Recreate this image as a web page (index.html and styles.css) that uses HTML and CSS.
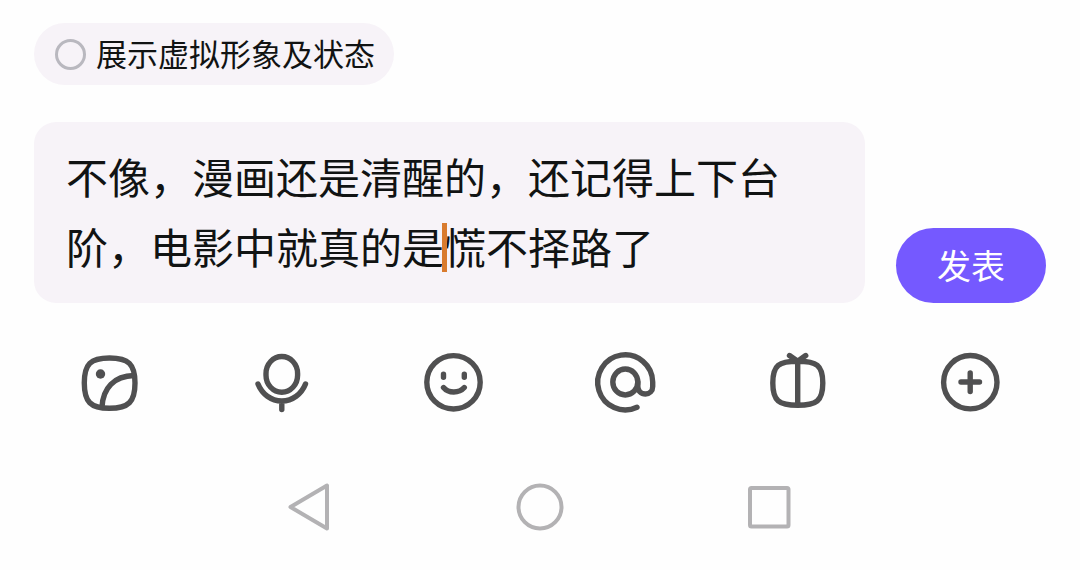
FILE: index.html
```html
<!DOCTYPE html>
<html lang="zh-CN">
<head>
<meta charset="utf-8">
<meta name="viewport" content="width=device-width, initial-scale=1">
<title>发表评论</title>
<link rel="stylesheet" href="styles.css">
</head>
<body>
<main class="composer">
  <label class="status-toggle">
    <input class="status-radio" type="radio" name="status">
    <span class="status-text">展示虚拟形象及状态</span>
  </label>
  <form class="compose-row">
    <div class="field">
      <textarea class="field-input" rows="2" aria-label="评论内容" spellcheck="false">不像，漫画还是清醒的，还记得上下台阶，电影中就真的是慌不择路了</textarea>
      <span class="caret"></span>
    </div>
    <button class="send" type="button">发表</button>
  </form>
</main>
<div class="tools">
  <button class="tool" type="button" aria-label="图片">
    <svg class="tool-icon" viewBox="0 0 80 80"><path d="M39.500 18C58.500 18 65 24 65 43C65 62 58.500 68.300 39.500 68.300C20.500 68.300 14.300 62 14.300 43C14.300 24 20.500 18 39.500 18Z"/><path d="M32 67C33 48 44 36 64 35.500"/><circle class="solid" cx="30.500" cy="34" r="4.700"/></svg>
  </button>
  <button class="tool" type="button" aria-label="语音">
    <svg class="tool-icon" viewBox="0 0 80 80"><rect x="24" y="16.500" width="31.600" height="35.700" rx="15.800" ry="17"/><path d="M16 44C20 54 29 61 39.800 61S59.500 54 63.500 44M39.800 61V69.500"/></svg>
  </button>
  <button class="tool" type="button" aria-label="表情">
    <svg class="tool-icon" viewBox="0 0 80 80"><circle cx="39.500" cy="42.300" r="26.700"/><path d="M29.500 34.200V37.300M50.300 34.200V37.300M29.500 47.500C34.500 53.500 45 53.500 50.300 47.500"/></svg>
  </button>
  <button class="tool" type="button" aria-label="提及">
    <svg class="tool-icon" viewBox="0 0 80 80"><ellipse cx="39.300" cy="42" rx="12.500" ry="13"/><path d="M51 67.200A27.500 27.500 0 1 1 66.700 42V46.500C66.700 51 63.500 54 59.500 54C55 54 51.800 51 51.800 46V42"/></svg>
  </button>
  <button class="tool" type="button" aria-label="礼物">
    <svg class="tool-icon" viewBox="0 0 80 80"><path d="M39.700 21.300C58.500 21.300 64.800 25 64.800 43C64.800 61 58.500 65.300 39.700 65.300C21 65.300 14.800 61 14.800 43C14.800 25 21 21.300 39.700 21.300ZM39.700 21.300V65.300M31.500 15.500L39.700 21.300L47.700 15.500"/></svg>
  </button>
  <button class="tool" type="button" aria-label="更多">
    <svg class="tool-icon" viewBox="0 0 80 80"><circle cx="40.300" cy="42.200" r="26.700"/><path d="M31 42H49.500M40.200 33V51.500"/></svg>
  </button>
</div>
<nav class="system-nav">
  <button class="nav-button" type="button" aria-label="返回">
    <svg class="nav-icon" viewBox="0 0 60 60"><path d="M10.500 30L47 8.500V51.500Z"/></svg>
  </button>
  <button class="nav-button" type="button" aria-label="主页">
    <svg class="nav-icon" viewBox="0 0 60 60"><circle cx="30" cy="30" r="21.500"/></svg>
  </button>
  <button class="nav-button" type="button" aria-label="最近任务">
    <svg class="nav-icon" viewBox="0 0 60 60"><rect x="10" y="11" width="38.500" height="38.500" rx="1.500"/></svg>
  </button>
</nav>
</body>
</html>
```
FILE: styles.css
```css
* {
  box-sizing: border-box;
}

body {
  margin: 0;
  background: #fefefe;
  color: #111313;
  font-family: "Noto Sans CJK SC", sans-serif;
}

button {
  padding: 0;
  border: 0;
  background: none;
  font: inherit;
}

.composer {
  display: flex;
  flex-direction: column;
  align-items: flex-start;
  gap: 37px;
  padding: 23px 34px 37px;
}

.status-toggle {
  display: flex;
  align-items: center;
  gap: 10px;
  padding: 8px 19px 8px 21px;
  border-radius: 31px;
  background: #f7f3f8;
  font-size: 31px;
}

.status-text {
  padding-bottom: 2px;
  line-height: 44px;
}

.status-radio {
  appearance: none;
  width: 31px;
  height: 31px;
  margin: 0;
  border: 3px solid #b9b8bf;
  border-radius: 50%;
}

.compose-row {
  display: flex;
  align-items: flex-end;
  gap: 31px;
  width: 100%;
}

.field {
  position: relative;
  flex: 1;
  display: flex;
}

.field-input {
  width: 100%;
  padding: 19px 64px 22px 32px;
  border: 0;
  border-radius: 22px;
  outline: 0;
  background: #f7f3f8;
  color: inherit;
  font: inherit;
  font-size: 42px;
  line-height: 70px;
  resize: none;
  overflow: hidden;
}

.caret {
  position: absolute;
  left: 408px;
  top: 101px;
  width: 5px;
  height: 49px;
  background: #d97b2e;
}

.send {
  width: 150px;
  padding-bottom: 2px;
  border-radius: 38px;
  background: #7559ff;
  color: #fff;
  font-size: 34px;
  line-height: 73px;
}

.tools {
  display: grid;
  grid-template-columns: repeat(6, 1fr);
  padding: 0 24px;
}

.tool,
.nav-button {
  display: flex;
  justify-content: center;
}

.tool-icon {
  width: 80px;
  height: 80px;
  fill: none;
  stroke: #505051;
  stroke-width: 5.4;
  stroke-linecap: round;
  stroke-linejoin: round;
}

.solid {
  fill: #505051;
  stroke: none;
}

.system-nav {
  display: grid;
  grid-template-columns: repeat(3, 230px);
  justify-content: center;
  padding: 47px 0 33px;
  padding-top: 57px;
}

.nav-icon {
  width: 60px;
  height: 60px;
  fill: none;
  stroke: #b3b2b4;
  stroke-width: 4;
  stroke-linejoin: round;
}
```
